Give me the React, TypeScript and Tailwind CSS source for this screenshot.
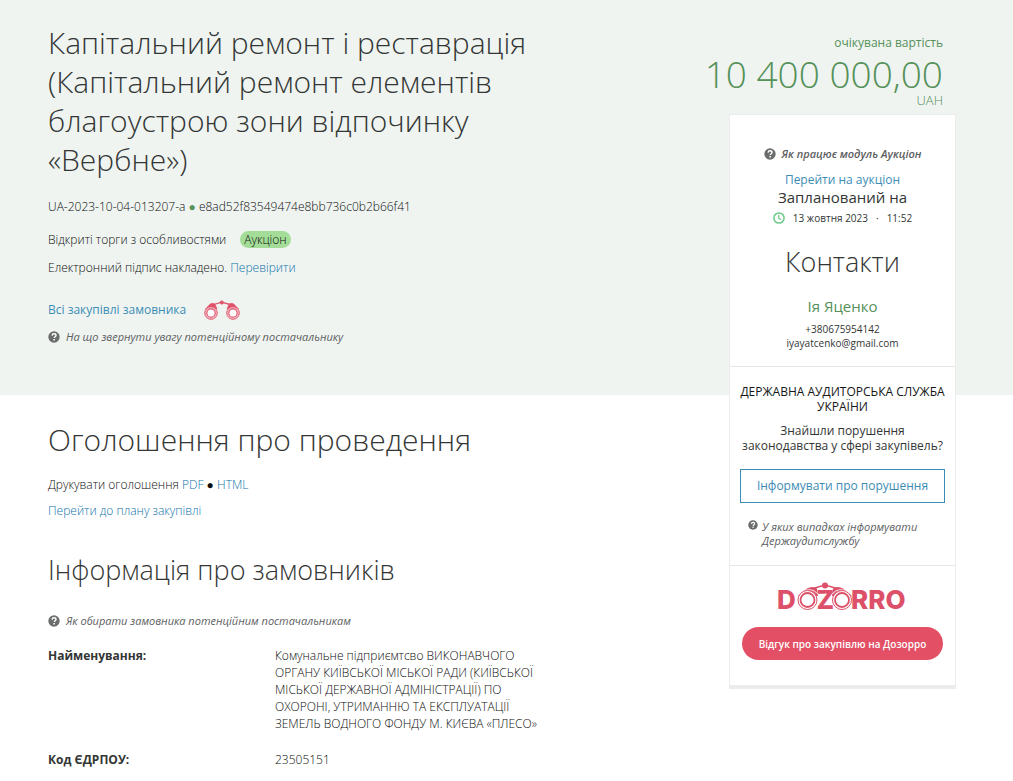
import React from "react";

function HelpIcon({ className = "size-3" }: { className?: string }) {
  return (
    <svg viewBox="0 0 12 12" className={`shrink-0 ${className}`} aria-hidden="true">
      <circle cx="6" cy="6" r="5.7" fill="#6b6d6c" />
      <path
        d="M4.1 4.6C4.2 3.4 5 2.8 6.1 2.8c1.1 0 1.9.6 1.9 1.6 0 1.3-1.8 1.3-1.8 2.7"
        fill="none"
        stroke="#fff"
        strokeWidth="1.4"
      />
      <rect x="5.4" y="8" width="1.5" height="1.5" fill="#fff" />
    </svg>
  );
}

function HelpLink({ children, weight = "font-medium" }: { children: React.ReactNode; weight?: string }) {
  return (
    <a href="#help" className={`inline-flex items-center gap-1.5 text-[11px] leading-4 italic text-[#5d605f] ${weight}`}>
      <HelpIcon />
      {children}
    </a>
  );
}

function Lens({ cx, cy, r }: { cx: number; cy: number; r: number }) {
  return (
    <g>
      <circle cx={cx} cy={cy} r={r} fill="#f3bcc5" stroke="#e0526a" strokeWidth="0.9" />
      <circle cx={cx} cy={cy} r={r * 0.66} fill="#fff" stroke="#e0526a" strokeWidth="1.1" />
    </g>
  );
}

function Binoculars() {
  return (
    <svg viewBox="0 0 36 20" className="h-5 w-9" aria-hidden="true">
      <g fill="#e0526a" stroke="#e0526a">
        <path d="M1.5 9 6 4.2Q8 2.400 11 4L13 9Z" strokeWidth=".6" />
        <path d="M34.500 9 30 4.200Q28 2.400 25 4L23 9Z" strokeWidth=".6" />
        <path d="M10 4.500 17.500 2.200 26 4.500" fill="none" strokeWidth="1.300" />
        <circle cx="17.800" cy="2.500" r="1.600" />
      </g>
      <Lens cx={7} cy={13} r={6.300} />
      <Lens cx={29} cy={13} r={6.300} />
    </svg>
  );
}

function DozorroLogo() {
  return (
    <svg viewBox="0 0 131 36" className="h-9 w-[131px]" role="img" aria-label="DOZORRO">
      <g fill="#dc5169">
        <path d="M21 14 30 6.500Q35 3.500 40 6.500L41 14Z" />
        <path d="M75 14 66 6.500Q61 3.500 56 6.500L55 14Z" />
        <path d="M36 6.500 48 3 60 6.500" fill="none" stroke="#dc5169" strokeWidth="1.500" />
        <circle cx="48" cy="3.500" r="3" />
      </g>
      <g fill="none" stroke="#fff" strokeWidth=".9">
        <path d="M25 10Q34 4.500 41 12M71 10Q62 4.500 55 12" />
      </g>
      <g stroke="#dc5169">
        <circle cx="30.500" cy="18" r="9.500" fill="#fff" strokeWidth="1" />
        <circle cx="30.500" cy="18" r="7" fill="none" strokeWidth="1.800" />
        <circle cx="65" cy="18" r="9.500" fill="#fff" strokeWidth="1" />
        <circle cx="65" cy="18" r="7" fill="none" strokeWidth="1.800" />
      </g>
      <g fill="#dc5169" fontFamily="Inter, sans-serif" fontWeight="800" fontSize="26">
        <text x="0" y="27">D</text>
        <text x="39.500" y="27">Z</text>
        <text x="74" y="27">RRO</text>
      </g>
    </svg>
  );
}

function ClockIcon() {
  return (
    <svg viewBox="0 0 12 12" className="size-3" fill="none" stroke="#6cc98a" aria-hidden="true">
      <circle cx="6" cy="6" r="5.100" strokeWidth="1.500" />
      <path d="M5.700 2.800V6.200L8 7.800" strokeWidth="1.200" />
    </svg>
  );
}

function Sidebar() {
  return (
    <aside className="col-start-2 row-span-2 row-start-1 mr-[57px] flex flex-col items-end pt-[35px] pb-8 font-normal text-[#333635]">
      <div className="pr-[13px] text-right text-[#559159]">
        <div className="text-xs leading-4">очікувана вартість</div>
        <div className="text-[37px] leading-[46px] font-light whitespace-nowrap">10 400 000,00</div>
        <div className="-mt-1 text-[13px] leading-[14px] font-light">UAH</div>
      </div>
      <div className="mt-[7px] w-[227px] border border-b-4 border-[#ebeded] bg-white text-center">
        <section className="border-b border-[#e6e8e8] pt-[31px] pb-4">
          <HelpLink weight="font-semibold">Як працює модуль Аукціон</HelpLink>
          <a href="#auction" className="mt-2 block text-xs leading-4 text-[#3c8db5]">Перейти на аукціон</a>
          <div className="text-[15px] leading-[18px]">Запланований на</div>
          <div className="mt-1 flex items-center justify-center gap-2 text-[10px] leading-4">
            <ClockIcon />
            <span>13 жовтня 2023</span>
            <span>·</span>
            <span>11:52</span>
          </div>
          <h2 className="mt-[18px] text-[27px] leading-9 font-light">Контакти</h2>
          <div className="mt-4 text-[15px] leading-5 text-[#559159]">Ія Яценко</div>
          <div className="mt-[6px] text-[10px] leading-[14px]">
            <div>+380675954142</div>
            <div>iyayatcenko@gmail.com</div>
          </div>
        </section>
        <section className="border-b border-[#e6e8e8] px-[10px] pt-[17px] pb-[17px]">
          <h3 className="-mx-2 text-xs leading-[15px] font-medium text-[#151716]">
            ДЕРЖАВНА АУДИТОРСЬКА СЛУЖБА
            <br />
            УКРАЇНИ
          </h3>
          <p className="mt-[9px] text-xs leading-[15px]">
            Знайшли порушення
            <br />
            законодавства у сфері закупівель?
          </p>
          <button type="button" className="mt-4 h-[34px] w-full border border-[#3c8db5] text-xs text-[#3c8db5]">
            Інформувати про порушення
          </button>
          <a href="#cases" className="mt-[17px] ml-2 flex gap-1 text-left text-[11px] leading-[14px] font-medium italic text-[#5d605f]">
            <HelpIcon className="size-[10px]" />
            <span>
              У яких випадках інформувати
              <br />
              Держаудитслужбу
            </span>
          </a>
        </section>
        <section className="flex flex-col items-center px-3 pt-4 pb-[25px]">
          <DozorroLogo />
          <button type="button" className="mt-[9px] h-[33px] w-full rounded-full bg-[#e35065] text-[10px] font-semibold text-white">
            Відгук про закупівлю на Дозорро
          </button>
        </section>
      </div>
    </aside>
  );
}

const details = [
  {
    label: "Найменування:",
    value:
      "Комунальне підприємтсво ВИКОНАВЧОГО ОРГАНУ КИЇВСЬКОЇ МІСЬКОЇ РАДИ (КИЇВСЬКОЇ МІСЬКОЇ ДЕРЖАВНОЇ АДМІНІСТРАЦІЇ) ПО ОХОРОНІ, УТРИМАННЮ ТА ЕКСПЛУАТАЦІЇ ЗЕМЕЛЬ ВОДНОГО ФОНДУ М. КИЄВА «ПЛЕСО»",
  },
  { label: "Код ЄДРПОУ:", value: "23505151" },
];

export default function App() {
  return (
    <main className="grid min-h-screen grid-cols-[minmax(0,1fr)_auto] grid-rows-[auto_1fr] bg-white font-['Open_Sans','Noto_Sans',sans-serif] text-xs leading-4 font-light text-[#0c0e0d]">
      <div className="col-span-2 col-start-1 row-start-1 bg-[#eff4f1]" />
      <header className="col-start-1 row-start-1 pt-[23px] pb-[50px] pl-12">
        <h1 className="max-w-[490px] text-[30px] leading-[39px] text-[#333635]">
          Капітальний ремонт і реставрація (Капітальний ремонт елементів благоустрою зони відпочинку «Вербне»)
        </h1>
        <div className="mt-5">
          UA-2023-10-04-013207-a <span className="text-[#559159]">●</span> e8ad52f83549474e8bb736c0b2b66f41
        </div>
        <div className="mt-4 flex items-center gap-[14px]">
          Відкриті торги з особливостями
          <span className="rounded-full bg-[#a3dd98] px-1 leading-[17px]">Аукціон</span>
        </div>
        <div className="mt-3">
          Електронний підпис накладено. <a href="#verify" className="text-[#0f73ab]">Перевірити</a>
        </div>
        <div className="mt-6 flex items-center gap-[18px]">
          <a href="#purchases" className="font-medium text-[#3c8db5]">Всі закупівлі замовника</a>
          <Binoculars />
        </div>
        <div className="mt-[9px] flex">
          <HelpLink>На що звернути увагу потенційному постачальнику</HelpLink>
        </div>
      </header>
      <div className="col-start-1 row-start-2 pt-[25px] pl-12">
        <h2 className="text-[30px] leading-10 text-[#333635]">Оголошення про проведення</h2>
        <div className="mt-[17px]">
          Друкувати оголошення <a href="#pdf" className="text-[#0f73ab]">PDF</a> ●{" "}
          <a href="#html" className="text-[#0f73ab]">HTML</a>
        </div>
        <a href="#plan" className="mt-[10px] block text-[#0f73ab]">Перейти до плану закупівлі</a>
        <h2 className="mt-[31px] text-[27px] leading-10 text-[#333635]">Інформація про замовників</h2>
        <div className="mt-[23px] flex">
          <HelpLink>Як обирати замовника потенційним постачальникам</HelpLink>
        </div>
        <table className="mt-[18px] text-left leading-[17px]">
          <tbody>
            {details.map((row) => (
              <tr key={row.label}>
                <th className="w-[227px] pb-[19px] align-top font-bold text-[#333635]">{row.label}</th>
                <td className="w-[278px] pb-[19px] align-top">{row.value}</td>
              </tr>
            ))}
          </tbody>
        </table>
      </div>
      <Sidebar />
    </main>
  );
}
